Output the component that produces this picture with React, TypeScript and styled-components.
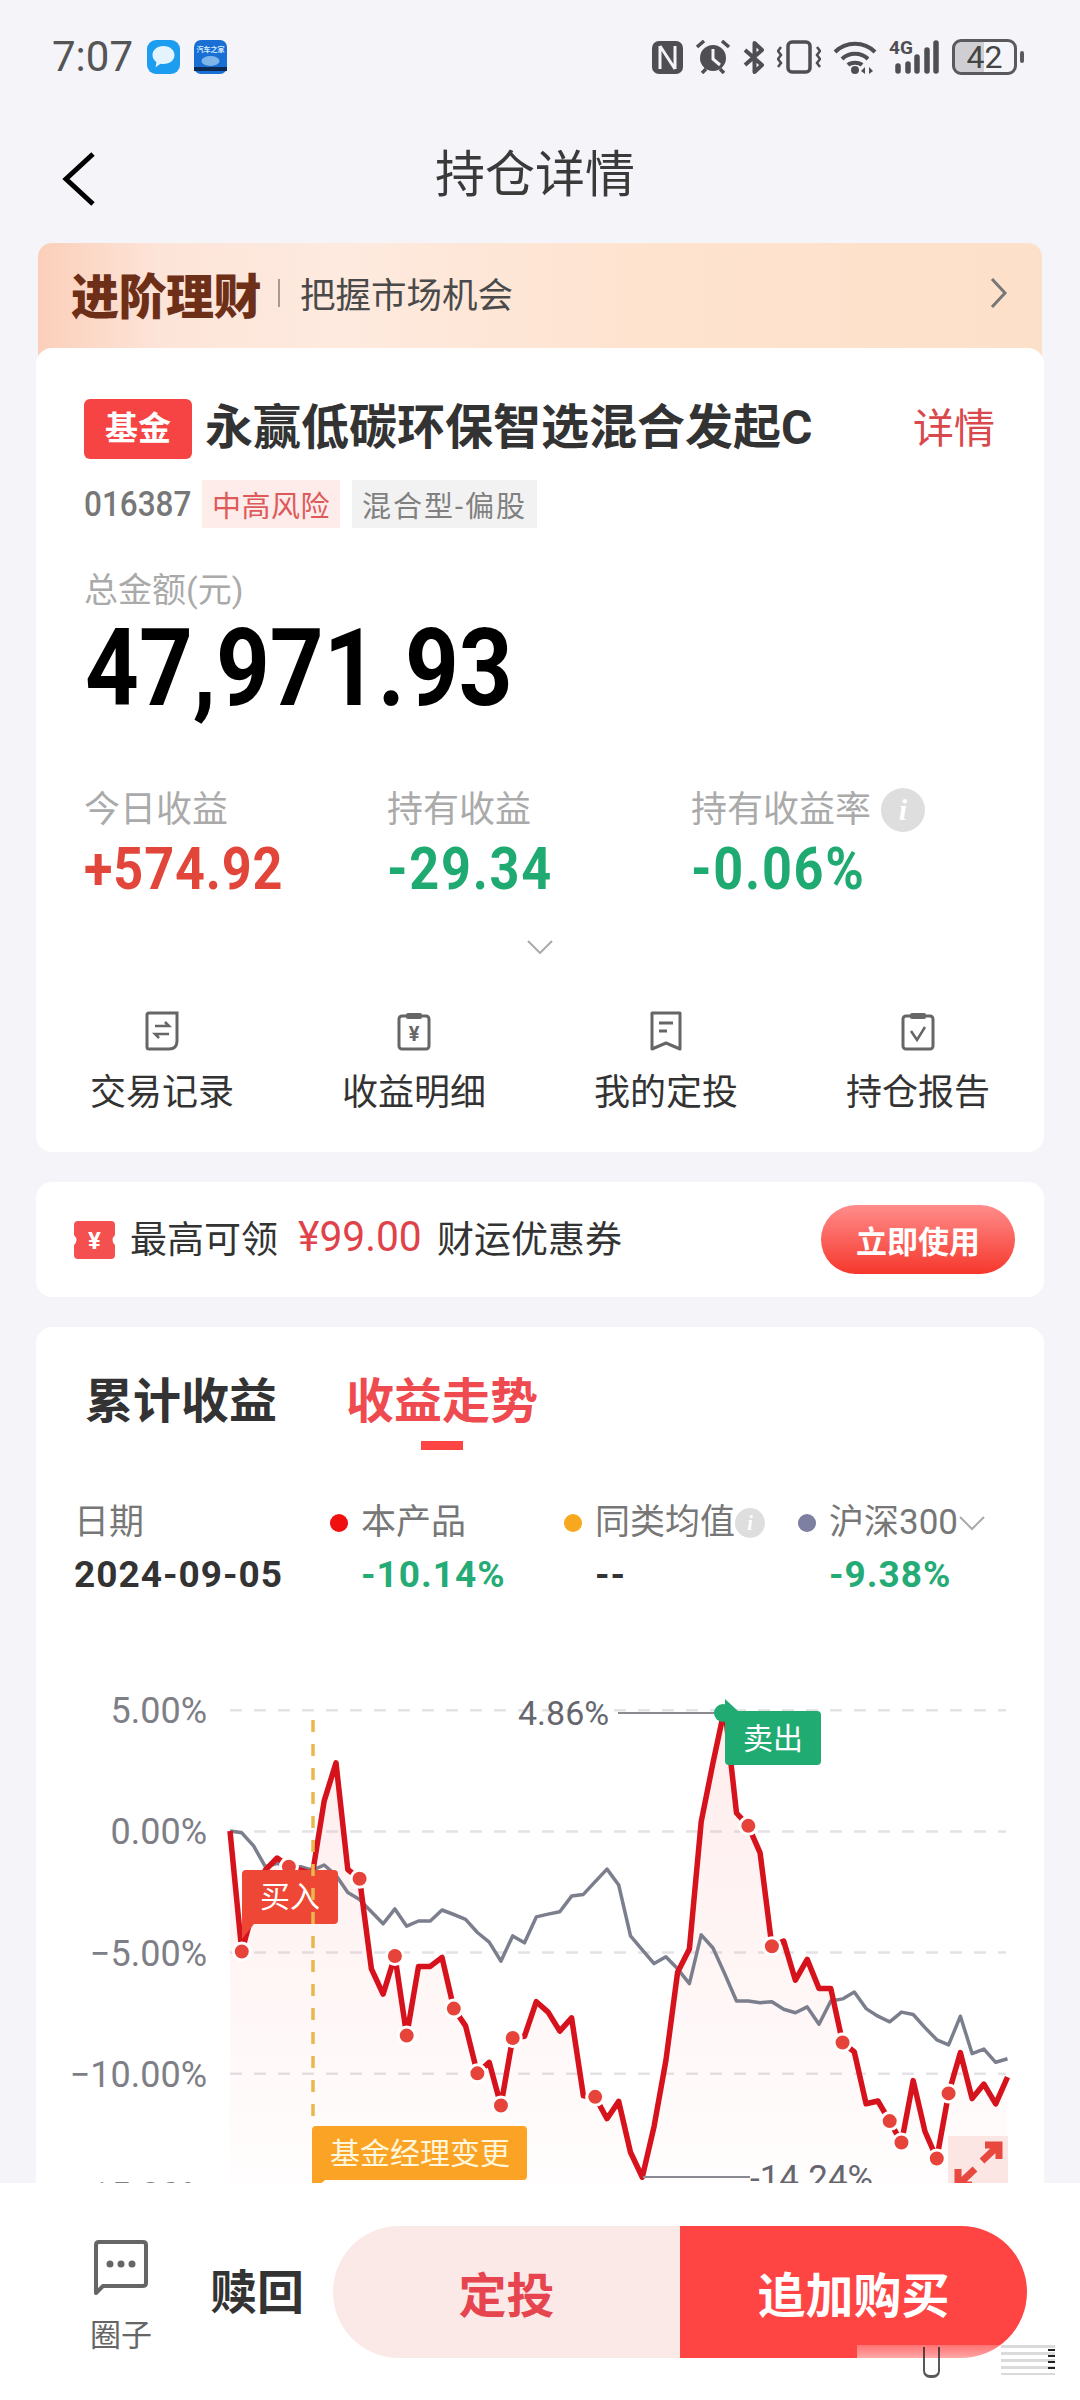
import React, { FC } from 'react';
import styled, { createGlobalStyle } from 'styled-components';

const GlobalStyle = createGlobalStyle`
	html, body {
		margin: 0;
		padding: 0;
		background: #f4f4f9;
		font-family: Roboto, "Noto Sans CJK SC", sans-serif;
	}
`;

const Page = styled.div`
	position: relative;
	width: 1080px;
	height: 2400px;
	overflow: hidden;
	background: #f4f4f9;
`;

/* status bar */
const StatusBar = styled.div`
	display: flex;
	align-items: center;
	height: 38px;
	margin-top: 38px;
	padding: 0 63px 0 52px;
`;
const Clock = styled.span`
	font-size: 42px;
	line-height: 38px;
	color: #555;
	margin-right: 14px;
`;
const AppIcon = styled.svg`
	margin-right: 14px;
`;
const StatusIcons = styled.div`
	display: flex;
	align-items: center;
	gap: 12px;
	margin-left: auto;
`;
const BatteryBox = styled.div`
	position: relative;
	display: flex;
	align-items: center;
	justify-content: center;
	width: 65px;
	height: 36px;
	box-sizing: border-box;
	border: 3px solid #5a5a5e;
	border-radius: 9px;
	background: linear-gradient(90deg, #cfcfd3 0 50%, transparent 50%);
	font-size: 32px;
	color: #444;
	&::after {
		content: '';
		position: absolute;
		right: -10px;
		top: 9px;
		width: 4px;
		height: 12px;
		border-radius: 2px;
		background: #5a5a5e;
	}
`;

/* nav */
const NavBar = styled.div`
	display: grid;
	grid-template-columns: 1fr auto 1fr;
	align-items: center;
	height: 167px;
	padding: 30px 72px 0 62px;
	box-sizing: border-box;
`;
const Title = styled.div`
	font-size: 50px;
	line-height: 50px;
	color: #3a3a3a;
`;
const BackIcon = styled.svg`
	margin-top: 8px;
`;

/* banner */
const Banner = styled.div`
	display: flex;
	align-items: center;
	height: 120px;
	margin: 0 38px -15px;
	padding: 0 34px 21px 33px;
	box-sizing: border-box;
	border-radius: 14px 14px 0 0;
	background: linear-gradient(90deg, #fbcfba 0%, #fde4d8 12%, #feeadf 30%, #fee3cf 60%, #fde0c9 100%);
`;
const BannerTitle = styled.span`
	font-size: 48px;
	font-weight: 900;
	color: #6e2f18;
	letter-spacing: -0.5px;
`;
const BannerDivider = styled.i`
	width: 2px;
	height: 28px;
	margin: 0 20px 0 17px;
	background: #a89a90;
`;
const BannerText = styled.span`
	font-size: 35.5px;
	color: #4a4a4a;
`;
const BannerArrow = styled.svg`
	margin-left: auto;
`;

/* cards */
const Card = styled.div`
	position: relative;
	margin: 0 36px;
	background: #fff;
	border-radius: 16px;
`;
const HoldingCard = styled(Card)`
	padding: 51px 0 41px;
`;
const HeadRow = styled.div`
	display: flex;
	align-items: center;
	height: 60px;
	padding: 0 49px 0 48px;
`;
const FundTag = styled.span`
	display: flex;
	align-items: center;
	justify-content: center;
	width: 108px;
	height: 60px;
	border-radius: 6px;
	background: #f64444;
	color: #fff;
	font-size: 33px;
	line-height: 40px;
	font-weight: 700;
`;
const FundName = styled.span`
	margin: -2px 0 0 13px;
	font-size: 48px;
	line-height: 56px;
	font-weight: 700;
	color: #333;
	white-space: nowrap;
`;
const DetailLink = styled.span`
	margin-left: auto;
	font-size: 41px;
	line-height: 48px;
	color: #d9484c;
`;
const MetaRow = styled.div`
	display: flex;
	align-items: center;
	height: 48px;
	margin-top: 21px;
	padding-left: 48px;
`;
const FundCode = styled.span`
	width: 104px;
	margin-right: 14px;
	font-size: 35px;
	font-weight: 500;
	color: #777;
	transform: scaleX(0.9);
	transform-origin: left center;
`;
const RiskTag = styled.span<{ $tone: 'red' | 'grey' }>`
	display: flex;
	align-items: center;
	height: 48px;
	margin-right: 12px;
	padding: 0 10px;
	font-size: 29px;
	letter-spacing: ${(p) => (p.$tone === 'grey' ? '2px' : '0.5px')};
	background: ${(p) => (p.$tone === 'red' ? '#fdecea' : '#f2f2f2')};
	color: ${(p) => (p.$tone === 'red' ? '#de5a5a' : '#808080')};
`;
const TotalLabel = styled.div`
	margin-top: 44px;
	padding-left: 48px;
	font-size: 34px;
	line-height: 36px;
	color: #aaa;
`;
const TotalAmount = styled.div`
	margin-top: 6px;
	padding-left: 49px;
	font-size: 108px;
	line-height: 108px;
	font-weight: 700;
	color: #000;
	transform: scaleX(0.87);
	transform-origin: 49px center;
`;
const Stats = styled.div`
	display: grid;
	grid-template-columns: 303px 304px 1fr;
	margin-top: 70px;
	padding-left: 48px;
`;
const StatLabel = styled.div`
	display: flex;
	align-items: center;
	gap: 10px;
	height: 36px;
	font-size: 36px;
	line-height: 36px;
	color: #aaa;
`;
const StatValue = styled.div<{ $up?: boolean }>`
	margin-top: 11px;
	font-size: 60px;
	line-height: 60px;
	font-weight: 700;
	letter-spacing: ${(p) => (p.$up ? '1px' : '2px')};
	color: ${(p) => (p.$up ? '#e2463a' : '#1faa72')};
	transform: scaleX(0.87);
	transform-origin: left center;
`;
const InfoDot = styled.span<{ $size: number }>`
	display: inline-flex;
	align-items: center;
	justify-content: center;
	flex: none;
	width: ${(p) => p.$size}px;
	height: ${(p) => p.$size}px;
	border-radius: 50%;
	background: #dedede;
	color: #fff;
	font-family: "Liberation Serif", serif;
	font-weight: 700;
	font-style: italic;
	font-size: ${(p) => Math.round(p.$size * 0.68)}px;
	line-height: 1;
`;
const ExpandRow = styled.div`
	display: flex;
	justify-content: center;
	height: 13px;
	margin-top: 41px;
`;
const Actions = styled.div`
	display: grid;
	grid-template-columns: repeat(4, 252px);
	margin-top: 58px;
`;
const ActionItem = styled.div`
	display: flex;
	flex-direction: column;
	align-items: center;
	gap: 24px;
	font-size: 36px;
	line-height: 36px;
	color: #333;
`;

/* coupon */
const CouponCard = styled(Card)`
	display: flex;
	align-items: center;
	height: 115px;
	margin-top: 30px;
	padding: 0 29px 0 38px;
	font-size: 37px;
	color: #333;
`;
const CouponTicket = styled.svg`
	margin-right: 15px;
`;
const CouponText = styled.span`
	margin-bottom: 6px;
`;
const CouponAmount = styled.span`
	width: 127px;
	margin: 0 12px 6px 20px;
	color: #e0424a;
	white-space: nowrap;
	font-size: 42px;
	transform: scaleX(0.97);
	transform-origin: left center;
`;
const CouponButton = styled.span`
	display: flex;
	align-items: center;
	justify-content: center;
	width: 194px;
	height: 69px;
	margin-left: auto;
	border-radius: 35px;
	background: linear-gradient(180deg, #ff8d8b, #f6372c);
	color: #fff;
	font-size: 31px;
	font-weight: 700;
`;

/* chart card */
const ChartCard = styled(Card)`
	margin-top: 30px;
	padding-top: 51px;
`;
const Tabs = styled.div`
	display: flex;
	gap: 69px;
	padding-left: 49px;
`;
const Tab = styled.div<{ $active?: boolean }>`
	display: flex;
	flex-direction: column;
	align-items: center;
	font-size: 48px;
	line-height: 47px;
	font-weight: 700;
	color: ${(p) => (p.$active ? '#ee4a50' : '#333')};
	&::after {
		content: '';
		width: 42px;
		height: 9px;
		margin-top: 16px;
		background: ${(p) => (p.$active ? '#f44' : 'transparent')};
	}
`;
const Legend = styled.div`
	display: grid;
	grid-template-columns: 256px 234px 234px 1fr;
	margin-top: 55px;
	padding-left: 38px;
`;
const LegendCell = styled.div`
	display: flex;
	flex-direction: column;
	gap: 18px;
`;
const LegendLabel = styled.div`
	display: flex;
	align-items: center;
	font-size: 35px;
	line-height: 36px;
	color: #777;
	white-space: nowrap;
`;
const LegendDot = styled.i<{ $color: string }>`
	width: 18px;
	height: 18px;
	margin-right: 13px;
	border-radius: 50%;
	background: ${(p) => p.$color};
`;
const LegendValue = styled.div<{ $green?: boolean; $indent?: boolean }>`
	padding-left: ${(p) => (p.$indent ? '31px' : '0')};
	font-size: 37px;
	line-height: 32px;
	font-weight: 700;
	letter-spacing: 1px;
	color: ${(p) => (p.$green ? '#25ab75' : '#333')};
`;
const ChartSvg = styled.svg`
	display: block;
	margin-top: 68px;
`;
const AxisText = styled.text`
	font-size: 36px;
	fill: #7e7e86;
	text-anchor: end;
`;
const PeakText = styled.text<{ $size: number }>`
	font-size: ${(p) => p.$size}px;
	fill: #66666e;
`;
const MarkerText = styled.text<{ $soft?: boolean }>`
	font-size: 30px;
	fill: ${(p) => (p.$soft ? '#fff6dc' : '#fff')};
	text-anchor: middle;
	dominant-baseline: central;
`;

/* footer */
const Footer = styled.div`
	position: absolute;
	left: 0;
	right: 0;
	bottom: 0;
	display: flex;
	align-items: flex-start;
	height: 217px;
	padding-left: 90px;
	box-sizing: border-box;
	background: #fff;
`;
const CircleLink = styled.div`
	display: flex;
	flex-direction: column;
	align-items: center;
	gap: 25px;
	width: 62px;
	margin-top: 57px;
	font-size: 31px;
	line-height: 31px;
	color: #666;
`;
const RedeemLink = styled.div`
	margin: 87px 29px 0 58px;
	font-size: 47px;
	line-height: 46px;
	font-weight: 700;
	color: #333;
`;
const BuyGroup = styled.div`
	display: flex;
	width: 694px;
	height: 132px;
	margin-top: 43px;
	border-radius: 66px;
	overflow: hidden;
`;
const BuyButton = styled.div<{ $primary?: boolean }>`
	flex: 1;
	display: flex;
	align-items: center;
	justify-content: center;
	font-size: 48px;
	font-weight: 700;
	background: ${(p) => (p.$primary ? '#ff4444' : '#fbe9e8')};
	color: ${(p) => (p.$primary ? '#fff' : '#e6444e')};
`;
// the blurred-out watermark in the corner of the screenshot
const Watermark = styled.div`
	position: absolute;
	left: 857px;
	top: 2345px;
	width: 198px;
	height: 30px;
	background:
		repeating-linear-gradient(180deg, rgba(150, 150, 150, 0.35) 0 3px, rgba(255, 255, 255, 0.2) 3px 7px) right / 54px 100% no-repeat,
		linear-gradient(180deg, rgba(255, 255, 255, 0.25), rgba(255, 255, 255, 0.9)) left / 144px 100% no-repeat;
	&::before {
		content: '';
		position: absolute;
		left: 66px;
		top: 2px;
		width: 13px;
		height: 28px;
		border: solid #222;
		border-width: 0 2px 3px;
		border-radius: 0 0 7px 7px;
		opacity: 0.75;
	}
	&::after {
		content: '';
		position: absolute;
		right: 0;
		top: 4px;
		width: 7px;
		height: 24px;
		background: repeating-linear-gradient(180deg, #222 0 2px, transparent 2px 6px);
	}
`;

const STEP = 11.78;
const px = (i: number) => 230 + i * STEP;
const py = (v: number) => 1660 + v / 2.889;

// sampled from the trend, one value per trading point
const productLine = [
	497, 845, 720, 610, 575, 600, 610, 620, 410, 300, 608, 635, 895, 968, 858, 1088, 888, 888, 862, 1010, 1060, 1197, 1165,
	1290, 1095, 1090, 990, 1020, 1075, 1037, 1262, 1265, 1328, 1278, 1425, 1497, 1350, 1160, 905, 838, 470, 300, 140, 445,
	482, 560, 830, 815, 928, 868, 952, 952, 1108, 1135, 1285, 1277, 1335, 1397, 1218, 1365, 1443, 1255, 1137, 1270, 1228,
	1285, 1208,
];
const indexLine = [
	497, 502, 540, 600, 590, 600, 600, 610, 595, 625, 675, 695, 730, 765, 722, 772, 757, 757, 725, 738, 752, 790, 818, 873,
	800, 820, 745, 737, 730, 685, 680, 643, 607, 653, 800, 840, 880, 860, 895, 938, 797, 835, 910, 988, 988, 993, 990, 1012,
	1022, 1005, 1055, 988, 982, 962, 1010, 1032, 1048, 1020, 1027, 1065, 1100, 1115, 1032, 1140, 1127, 1165, 1155,
];
const tradeDots = [1, 5, 11, 14, 15, 19, 21, 23, 24, 31, 44, 46, 52, 56, 57, 60, 61];
const gridLines = [
	{ y: 148, label: '5.00%' },
	{ y: 498, label: '0.00%' },
	{ y: 848, label: '−5.00%' },
	{ y: 1198, label: '−10.00%' },
	{ y: 1548, label: '−15.00%' },
];

const toPoints = (line: number[]) => line.map((v, i) => `${px(i).toFixed(1)},${py(v).toFixed(1)}`).join(' ');

const Chart: FC = () => (
	<ChartSvg width="1008" height="560" viewBox="36 1660 1008 560">
		<defs>
			<linearGradient id="area" x1="0" y1="0" x2="0" y2="1">
				<stop offset="0" stopColor="#ff4444" stopOpacity="0.1" />
				<stop offset="1" stopColor="#ff4444" stopOpacity="0.01" />
			</linearGradient>
		</defs>
		{gridLines.map((g) => (
			<g key={g.label}>
				{g.y < 1500 && (
					<line x1="230" x2="1006" y1={py(g.y)} y2={py(g.y)} stroke="#e3e3e6" strokeWidth="2.5" strokeDasharray="12 12" />
				)}
				<AxisText x="207" y={py(g.y) + 13}>
					{g.label}
				</AxisText>
			</g>
		))}
		<polygon points={`230,${py(497)} ${toPoints(productLine)} ${px(66)},2190 230,2190`} fill="url(#area)" />
		<polyline points={toPoints(indexLine)} fill="none" stroke="#7b7e8c" strokeWidth="3.5" strokeLinejoin="round" />
		<polyline points={toPoints(productLine)} fill="none" stroke="#d6121c" strokeWidth="5.5" strokeLinejoin="round" />
		{tradeDots.map((i) => (
			<circle key={i} cx={px(i)} cy={py(productLine[i])} r="8.5" fill="#e6443a" stroke="#fff" strokeWidth="3" />
		))}

		<path d="M242 1875 q0 -4 4 -4 h88 q4 0 4 4 v46 q0 4 -4 4 h-80 l-12 15 z" fill="#ee4736" />
		<MarkerText x="290" y="1897">
			买入
		</MarkerText>
		<line x1="313" x2="313" y1="1721" y2="2119" stroke="#e9b84c" strokeWidth="3.5" strokeDasharray="12 12" />

		<path d="M312 2131 q0 -4 4 -4 h207 q4 0 4 4 v46 q0 4 -4 4 h-198 l-13 12 z" fill="#fba324" />
		<MarkerText x="420" y="2154" $soft>
			基金经理变更
		</MarkerText>

		<PeakText x="518" y="1726" $size={34}>
			4.86%
		</PeakText>
		<line x1="618" x2="720" y1="1714" y2="1714" stroke="#8a8a90" strokeWidth="2" />
		<circle cx="723" cy="1714" r="9" fill="#20ab72" />
		<path d="M725 1700 l13 12 h79 q4 0 4 4 v46 q0 4 -4 4 h-88 q-4 0 -4 -4 z" fill="#20ab72" />
		<MarkerText x="773" y="1739">
			卖出
		</MarkerText>

		<line x1="643" x2="750" y1="2178" y2="2178" stroke="#8a8a90" strokeWidth="2" />
		<PeakText x="750" y="2191" $size={35}>
			-14.24%
		</PeakText>

		<rect x="948" y="2137" width="60" height="62" fill="#fbe6e4" />
		<g stroke="#e8483e" strokeWidth="7" fill="none">
			<path d="M982 2162 L999 2146 M985 2146 H999 V2160" />
			<path d="M958 2186 L975 2170 M958 2170 V2186 H972" />
		</g>
	</ChartSvg>
);

const App: FC = () => (
	<Page>
		<GlobalStyle />
		<StatusBar>
			<Clock>7:07</Clock>
			<AppIcon width="33" height="34" viewBox="0 0 33 34">
				<rect width="33" height="34" rx="9" fill="#1d9df0" />
				<path d="M16.5 6c6.500 0 11 4 11 9s-4.500 9-11 9c-1 0-2-.1-3-.3l-5 3.500 1-5c-2.500-1.700-4-4.200-4-7.200C5.500 10 10 6 16.500 6z" fill="#e4f4fe" />
			</AppIcon>
			<AppIcon width="33" height="34" viewBox="0 0 33 34">
				<rect width="33" height="34" rx="7" fill="#1a6fd4" />
				<text x="16.500" y="12" textAnchor="middle" fontFamily="Noto Sans CJK SC" fontWeight="700" fontSize="7" fill="#d6ecff">
					汽车之家
				</text>
				<ellipse cx="16.500" cy="21" rx="9" ry="5" fill="#7fb6ea" />
				<rect y="27" width="33" height="4" fill="#0d2a52" />
			</AppIcon>
			<StatusIcons>
				<svg width="31" height="33" viewBox="0 0 31 33">
					<rect width="31" height="33" rx="7" fill="#4f4f53" />
					<path d="M8 5v23M23 5v23M8 5l15 23" stroke="#f4f4f9" strokeWidth="3" fill="none" />
				</svg>
				<svg width="36" height="34" viewBox="0 0 36 34">
					<circle cx="18" cy="18" r="13" fill="#4f4f53" />
					<path d="M18 9v10l7 6" stroke="#f4f4f9" strokeWidth="3" fill="none" />
					<path d="M2 7l7-6M34 7l-7-6M7 33l4-4M29 33l-4-4" stroke="#4f4f53" strokeWidth="3.5" />
				</svg>
				<svg width="22" height="33" viewBox="0 0 22 33">
					<path d="M2 9l17 15-7.500 7V2L19 9 2 24" stroke="#4f4f53" strokeWidth="4" fill="none" strokeLinejoin="round" />
				</svg>
				<svg width="44" height="34" viewBox="0 0 44 34">
					<rect x="11" y="2" width="22" height="30" rx="4" stroke="#4f4f53" strokeWidth="3.5" fill="none" />
					<path d="M4 7l-3 4 3 4-3 4 3 4-3 4M40 7l3 4-3 4 3 4-3 4 3 4" stroke="#4f4f53" strokeWidth="2.5" fill="none" />
				</svg>
				<svg width="44" height="33" viewBox="0 0 44 33">
					<path d="M2 11c11-11 29-11 40 0M9 18c7-7 19-7 26 0M15 24c3-3 11-3 14 0" stroke="#4f4f53" strokeWidth="4" fill="none" />
					<circle cx="22" cy="29" r="4" fill="#4f4f53" />
					<path d="M32 26l-4 4 4 3zM36 33l4-3-4-4z" fill="#4f4f53" />
				</svg>
				<svg width="51" height="42" viewBox="0 -4 51 42">
					<text x="0" y="14" fontFamily="Roboto" fontWeight="700" fontSize="19" fill="#4f4f53">
						4G
					</text>
					<g stroke="#4f4f53" strokeWidth="5.5" strokeLinecap="round">
						<path d="M9 26v5M19 24v7M28 17v14M38 10v21M47 3v28" />
					</g>
				</svg>
				<BatteryBox>42</BatteryBox>
			</StatusIcons>
		</StatusBar>

		<NavBar>
			<BackIcon width="34" height="54" viewBox="0 0 34 54">
				<path d="M31 2L4 27l27 25" stroke="#000" strokeWidth="5" fill="none" />
			</BackIcon>
			<Title>持仓详情</Title>
		</NavBar>

		<Banner>
			<BannerTitle>进阶理财</BannerTitle>
			<BannerDivider />
			<BannerText>把握市场机会</BannerText>
			<BannerArrow width="18" height="30" viewBox="0 0 18 30">
				<path d="M2 1l13 14L2 29" stroke="#777" strokeWidth="3" fill="none" />
			</BannerArrow>
		</Banner>

		<HoldingCard>
			<HeadRow>
				<FundTag>基金</FundTag>
				<FundName>永赢低碳环保智选混合发起C</FundName>
				<DetailLink>详情</DetailLink>
			</HeadRow>
			<MetaRow>
				<FundCode>016387</FundCode>
				<RiskTag $tone="red">中高风险</RiskTag>
				<RiskTag $tone="grey">混合型-偏股</RiskTag>
			</MetaRow>
			<TotalLabel>总金额(元)</TotalLabel>
			<TotalAmount>47,971.93</TotalAmount>
			<Stats>
				<div>
					<StatLabel>今日收益</StatLabel>
					<StatValue $up>+574.92</StatValue>
				</div>
				<div>
					<StatLabel>持有收益</StatLabel>
					<StatValue>-29.34</StatValue>
				</div>
				<div>
					<StatLabel>
						持有收益率 <InfoDot $size={44}>i</InfoDot>
					</StatLabel>
					<StatValue>-0.06%</StatValue>
				</div>
			</Stats>
			<ExpandRow>
				<svg width="26" height="14" viewBox="0 0 26 14">
					<path d="M1 1l12 12L25 1" stroke="#aaa" strokeWidth="2" fill="none" />
				</svg>
			</ExpandRow>
			<Actions>
				<ActionItem>
					<svg width="34" height="40" viewBox="0 0 34 40">
						<path d="M2 4q0-2 2-2h28v28q0 8-8 8H4q-2 0-2-2z" stroke="#666" strokeWidth="3" fill="none" />
						<path d="M10 15h14l-4-4M24 23H10l4 4" stroke="#666" strokeWidth="2.5" fill="none" />
					</svg>
					交易记录
				</ActionItem>
				<ActionItem>
					<svg width="34" height="40" viewBox="0 0 34 40">
						<rect x="2" y="5" width="30" height="33" rx="3" stroke="#666" strokeWidth="3" fill="none" />
						<rect x="9" y="2" width="16" height="6" rx="2" fill="#666" />
						<text x="17" y="30" textAnchor="middle" fontFamily="Roboto" fontWeight="700" fontSize="20" fill="#666">
							¥
						</text>
					</svg>
					收益明细
				</ActionItem>
				<ActionItem>
					<svg width="32" height="40" viewBox="0 0 32 40">
						<path d="M2 38V2h28v36l-14-6z" stroke="#666" strokeWidth="3" fill="none" strokeLinejoin="round" />
						<path d="M9 12h14M9 20h8" stroke="#666" strokeWidth="3" />
					</svg>
					我的定投
				</ActionItem>
				<ActionItem>
					<svg width="34" height="40" viewBox="0 0 34 40">
						<rect x="2" y="5" width="30" height="33" rx="3" stroke="#666" strokeWidth="3" fill="none" />
						<rect x="9" y="2" width="16" height="6" rx="2" fill="#666" />
						<path d="M10 20l6 9 8-13" stroke="#666" strokeWidth="2.5" fill="none" />
					</svg>
					持仓报告
				</ActionItem>
			</Actions>
		</HoldingCard>

		<CouponCard>
			<CouponTicket width="41" height="38" viewBox="0 0 41 38">
				<path d="M4 0h33q4 0 4 4v10q-5 5 0 10v10q0 4-4 4H4q-4 0-4-4V24q5-5 0-10V4q0-4 4-4z" fill="#f4504f" />
				<text x="20.5" y="28" textAnchor="middle" fontFamily="Roboto" fontWeight="700" fontSize="24" fill="#fff">
					¥
				</text>
			</CouponTicket>
			<CouponText>最高可领</CouponText>
			<CouponAmount>¥99.00</CouponAmount>
			<CouponText>财运优惠券</CouponText>
			<CouponButton>立即使用</CouponButton>
		</CouponCard>

		<ChartCard>
			<Tabs>
				<Tab>累计收益</Tab>
				<Tab $active>收益走势</Tab>
			</Tabs>
			<Legend>
				<LegendCell>
					<LegendLabel>日期</LegendLabel>
					<LegendValue>2024-09-05</LegendValue>
				</LegendCell>
				<LegendCell>
					<LegendLabel>
						<LegendDot $color="#f01010" />
						本产品
					</LegendLabel>
					<LegendValue $green $indent>
						-10.14%
					</LegendValue>
				</LegendCell>
				<LegendCell>
					<LegendLabel>
						<LegendDot $color="#f8a81f" />
						同类均值
						<InfoDot $size={30}>i</InfoDot>
					</LegendLabel>
					<LegendValue $indent>--</LegendValue>
				</LegendCell>
				<LegendCell>
					<LegendLabel>
						<LegendDot $color="#7e80a2" />
						沪深300
						<svg width="28" height="16" viewBox="0 0 28 16">
							<path d="M2 2l12 12L26 2" stroke="#aaa" strokeWidth="2" fill="none" />
						</svg>
					</LegendLabel>
					<LegendValue $green $indent>
						-9.38%
					</LegendValue>
				</LegendCell>
			</Legend>
			<Chart />
		</ChartCard>

		<Footer>
			<CircleLink>
				<svg width="54" height="55" viewBox="0 0 54 55">
					<path d="M2 5q0-3 3-3h44q3 0 3 3v38q0 3-3 3H9l-7 7z" stroke="#666" strokeWidth="4" fill="none" strokeLinejoin="round" />
					<circle cx="16" cy="24" r="3.5" fill="#666" />
					<circle cx="27" cy="24" r="3.5" fill="#666" />
					<circle cx="38" cy="24" r="3.5" fill="#666" />
				</svg>
				圈子
			</CircleLink>
			<RedeemLink>赎回</RedeemLink>
			<BuyGroup>
				<BuyButton>定投</BuyButton>
				<BuyButton $primary>追加购买</BuyButton>
			</BuyGroup>
		</Footer>
		<Watermark />
	</Page>
);

export default App;
